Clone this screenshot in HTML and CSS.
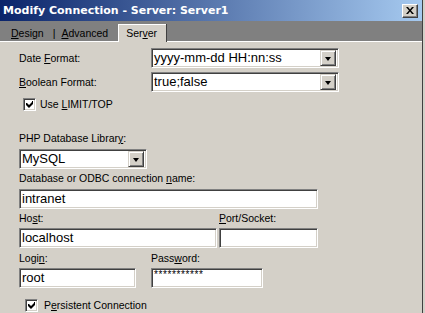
FILE: index.html
```html
<!DOCTYPE html>
<html lang="en">
<head>
    <meta charset="UTF-8">
    <title>Modify Connection - Server: Server1</title>
    <link rel="stylesheet" href="styles.css">
</head>
<body>

    <div class="window">

        <!-- Title Bar -->
        <div class="titlebar">
            <span class="title">Modify Connection - Server: Server1</span>
            <span class="close">
                <svg width="8" height="7" viewBox="0 0 8 7">
                    <path d="M0 0h2l2 2.5L6 0h2L5 3.5L8 7H6L4 4.5L2 7H0l3-3.5z" fill="#000"/>
                </svg>
            </span>
        </div>

        <!-- Tabs -->
        <div class="tabs">
            <span class="tab"><u>D</u>esign</span>
            <span class="sep">|</span>
            <span class="tab"><u>A</u>dvanced</span>
            <span class="tab active">Ser<u>v</u>er</span>
        </div>

        <!-- Server Panel -->
        <div class="panel">
            <div class="format-row first">
                <span class="label">Date <u>F</u>ormat:</span>
                <div class="field select wide">
                    <span class="value">yyyy-mm-dd HH:nn:ss</span>
                    <span class="drop"></span>
                </div>
            </div>
            <div class="format-row">
                <span class="label"><u>B</u>oolean Format:</span>
                <div class="field select wide">
                    <span class="value">true;false</span>
                    <span class="drop"></span>
                </div>
            </div>

            <div class="check-row limit">
                <span class="checkbox">
                    <svg width="7" height="7" viewBox="0 0 7 7">
                        <path d="M0 2h1l2 2l3-3V0h1v3L3 7L0 4z" fill="#000"/>
                    </svg>
                </span>
                <span class="label">Use <u>L</u>IMIT/TOP</span>
            </div>

            <p class="label php">PHP Database Librar<u>y</u>:</p>
            <div class="field select lib">
                <span class="value">MySQL</span>
                <span class="drop"></span>
            </div>

            <p class="label db">Database or ODBC connection <u>n</u>ame:</p>
            <div class="field db-name"><span class="value">intranet</span></div>

            <div class="pair host-row">
                <div class="col">
                    <p class="label">Ho<u>s</u>t:</p>
                    <div class="field host"><span class="value">localhost</span></div>
                </div>
                <div class="col">
                    <p class="label"><u>P</u>ort/Socket:</p>
                    <div class="field port"></div>
                </div>
            </div>

            <div class="pair login-row">
                <div class="col">
                    <p class="label">Logi<u>n</u>:</p>
                    <div class="field login"><span class="value">root</span></div>
                </div>
                <div class="col">
                    <p class="label">Pass<u>w</u>ord:</p>
                    <div class="field password"><span class="stars">***********</span></div>
                </div>
            </div>

            <div class="check-row persistent">
                <span class="checkbox">
                    <svg width="7" height="7" viewBox="0 0 7 7">
                        <path d="M0 2h1l2 2l3-3V0h1v3L3 7L0 4z" fill="#000"/>
                    </svg>
                </span>
                <span class="label">P<u>e</u>rsistent Connection</span>
            </div>
        </div>

    </div>

</body>
</html>
```

FILE: styles.css
```css
/* --- Base --- */
body {
    margin: 0;
    background-color: #d4d0c8;
    font-family: 'Liberation Sans', Arial, sans-serif;
    color: #000;
    overflow: hidden;
}

p {
    margin: 0;
}

u {
    text-decoration-thickness: 1px;
    text-underline-offset: 1px;
}

/* --- Window --- */
.window {
    width: 422px;
    height: 313px;
    border-right: 1px solid #404040;
    background-color: #d4d0c8;
}

/* --- Title Bar --- */
.titlebar {
    height: 21px;
    display: flex;
    align-items: center;
    justify-content: space-between;
    padding: 0 3px 0 3px;
    background: linear-gradient(to right, #0a246a, #a6caf0);
}

.title {
    color: #fff;
    font-family: 'DejaVu Sans', sans-serif;
    font-weight: 700;
    font-size: 11px;
}

.close {
    width: 14px;
    height: 12px;
    display: flex;
    align-items: center;
    justify-content: center;
    background-color: #d4d0c8;
    border: 1px solid;
    border-color: #fff #404040 #404040 #fff;
    box-shadow: inset -1px -1px #808080;
    margin-right: 1px;
}

/* --- Tabs --- */
.tabs {
    height: 20px;
    display: flex;
    align-items: flex-end;
    background-color: #808080;
    border-bottom: 1px solid #fff;
    font-size: 10.5px;
}

.tab {
    line-height: 16px;
}

.tabs .tab:first-child {
    margin-left: 11px;
}

.sep {
    line-height: 16px;
    margin: 0 6px 0 9px;
}

.tab.active {
    margin-left: 10px;
    width: 40px;
    height: 16px;
    padding: 0 0 1px 7px;
    margin-bottom: -1px;
    background-color: #d4d0c8;
    border-top: 1px solid #fff;
    border-left: 1px solid #fff;
    box-shadow: 1px 0 #404040;
    line-height: 17px;
}

/* --- Panel --- */
.panel {
    padding-left: 19px;
}

.label {
    font-size: 10.5px;
    line-height: 13px;
    white-space: nowrap;
}

/* Sunken field */
.field {
    box-sizing: border-box;
    height: 20px;
    background-color: #fff;
    border: 1px solid;
    border-color: #808080 #fff #fff #808080;
    box-shadow: inset 1px 1px #404040, inset -1px -1px #d4d0c8;
    display: flex;
    align-items: center;
    padding-left: 2px;
    font-size: 13px;
}

.value {
    line-height: 16px;
    white-space: nowrap;
}

.select {
    justify-content: space-between;
    padding-right: 2px;
}

.drop {
    box-sizing: border-box;
    width: 16px;
    height: 16px;
    background-color: #d4d0c8;
    border: 1px solid;
    border-color: #d4d0c8 #404040 #404040 #d4d0c8;
    box-shadow: inset 1px 1px #fff, inset -1px -1px #808080;
    position: relative;
}

.drop::after {
    content: "";
    position: absolute;
    left: 4px;
    top: 6px;
    border-left: 3.5px solid transparent;
    border-right: 3.5px solid transparent;
    border-top: 4px solid #000;
}

/* Date / Boolean rows */
.format-row {
    display: flex;
    align-items: center;
    height: 20px;
    margin-top: 4px;
}

.format-row.first {
    margin-top: 6px;
}

.format-row .label {
    width: 132px;
}

.wide {
    width: 188px;
}

/* Checkboxes */
.check-row {
    display: flex;
    align-items: center;
    gap: 4px;
    height: 13px;
}

.check-row.limit {
    margin: 6px 0 0 4px;
}

.check-row.persistent {
    margin: 11px 0 0 6px;
    gap: 6px;
}

.checkbox {
    box-sizing: border-box;
    width: 13px;
    height: 13px;
    background-color: #fff;
    border: 1px solid;
    border-color: #808080 #fff #fff #808080;
    box-shadow: inset 1px 1px #404040, inset -1px -1px #d4d0c8;
    display: flex;
    align-items: center;
    justify-content: center;
}

/* Library */
.php {
    margin-top: 21px;
}

.lib {
    width: 128px;
    margin-top: 4px;
}

.db {
    margin-top: 3px;
}

.db-name {
    width: 299px;
    margin-top: 4px;
}

/* Host / Login pairs */
.pair {
    display: flex;
}

.pair .field {
    margin-top: 3px;
}

.host-row {
    margin-top: 3px;
    gap: 2px;
}

.host {
    width: 198px;
}

.port {
    width: 99px;
}

.login-row {
    margin-top: 4px;
    gap: 15px;
}

.login {
    width: 117px;
}

.password {
    width: 112px;
    align-items: flex-start;
}

.stars {
    font-size: 10px;
    line-height: 10px;
    letter-spacing: 0.6px;
    margin-top: 1px;
}
```
